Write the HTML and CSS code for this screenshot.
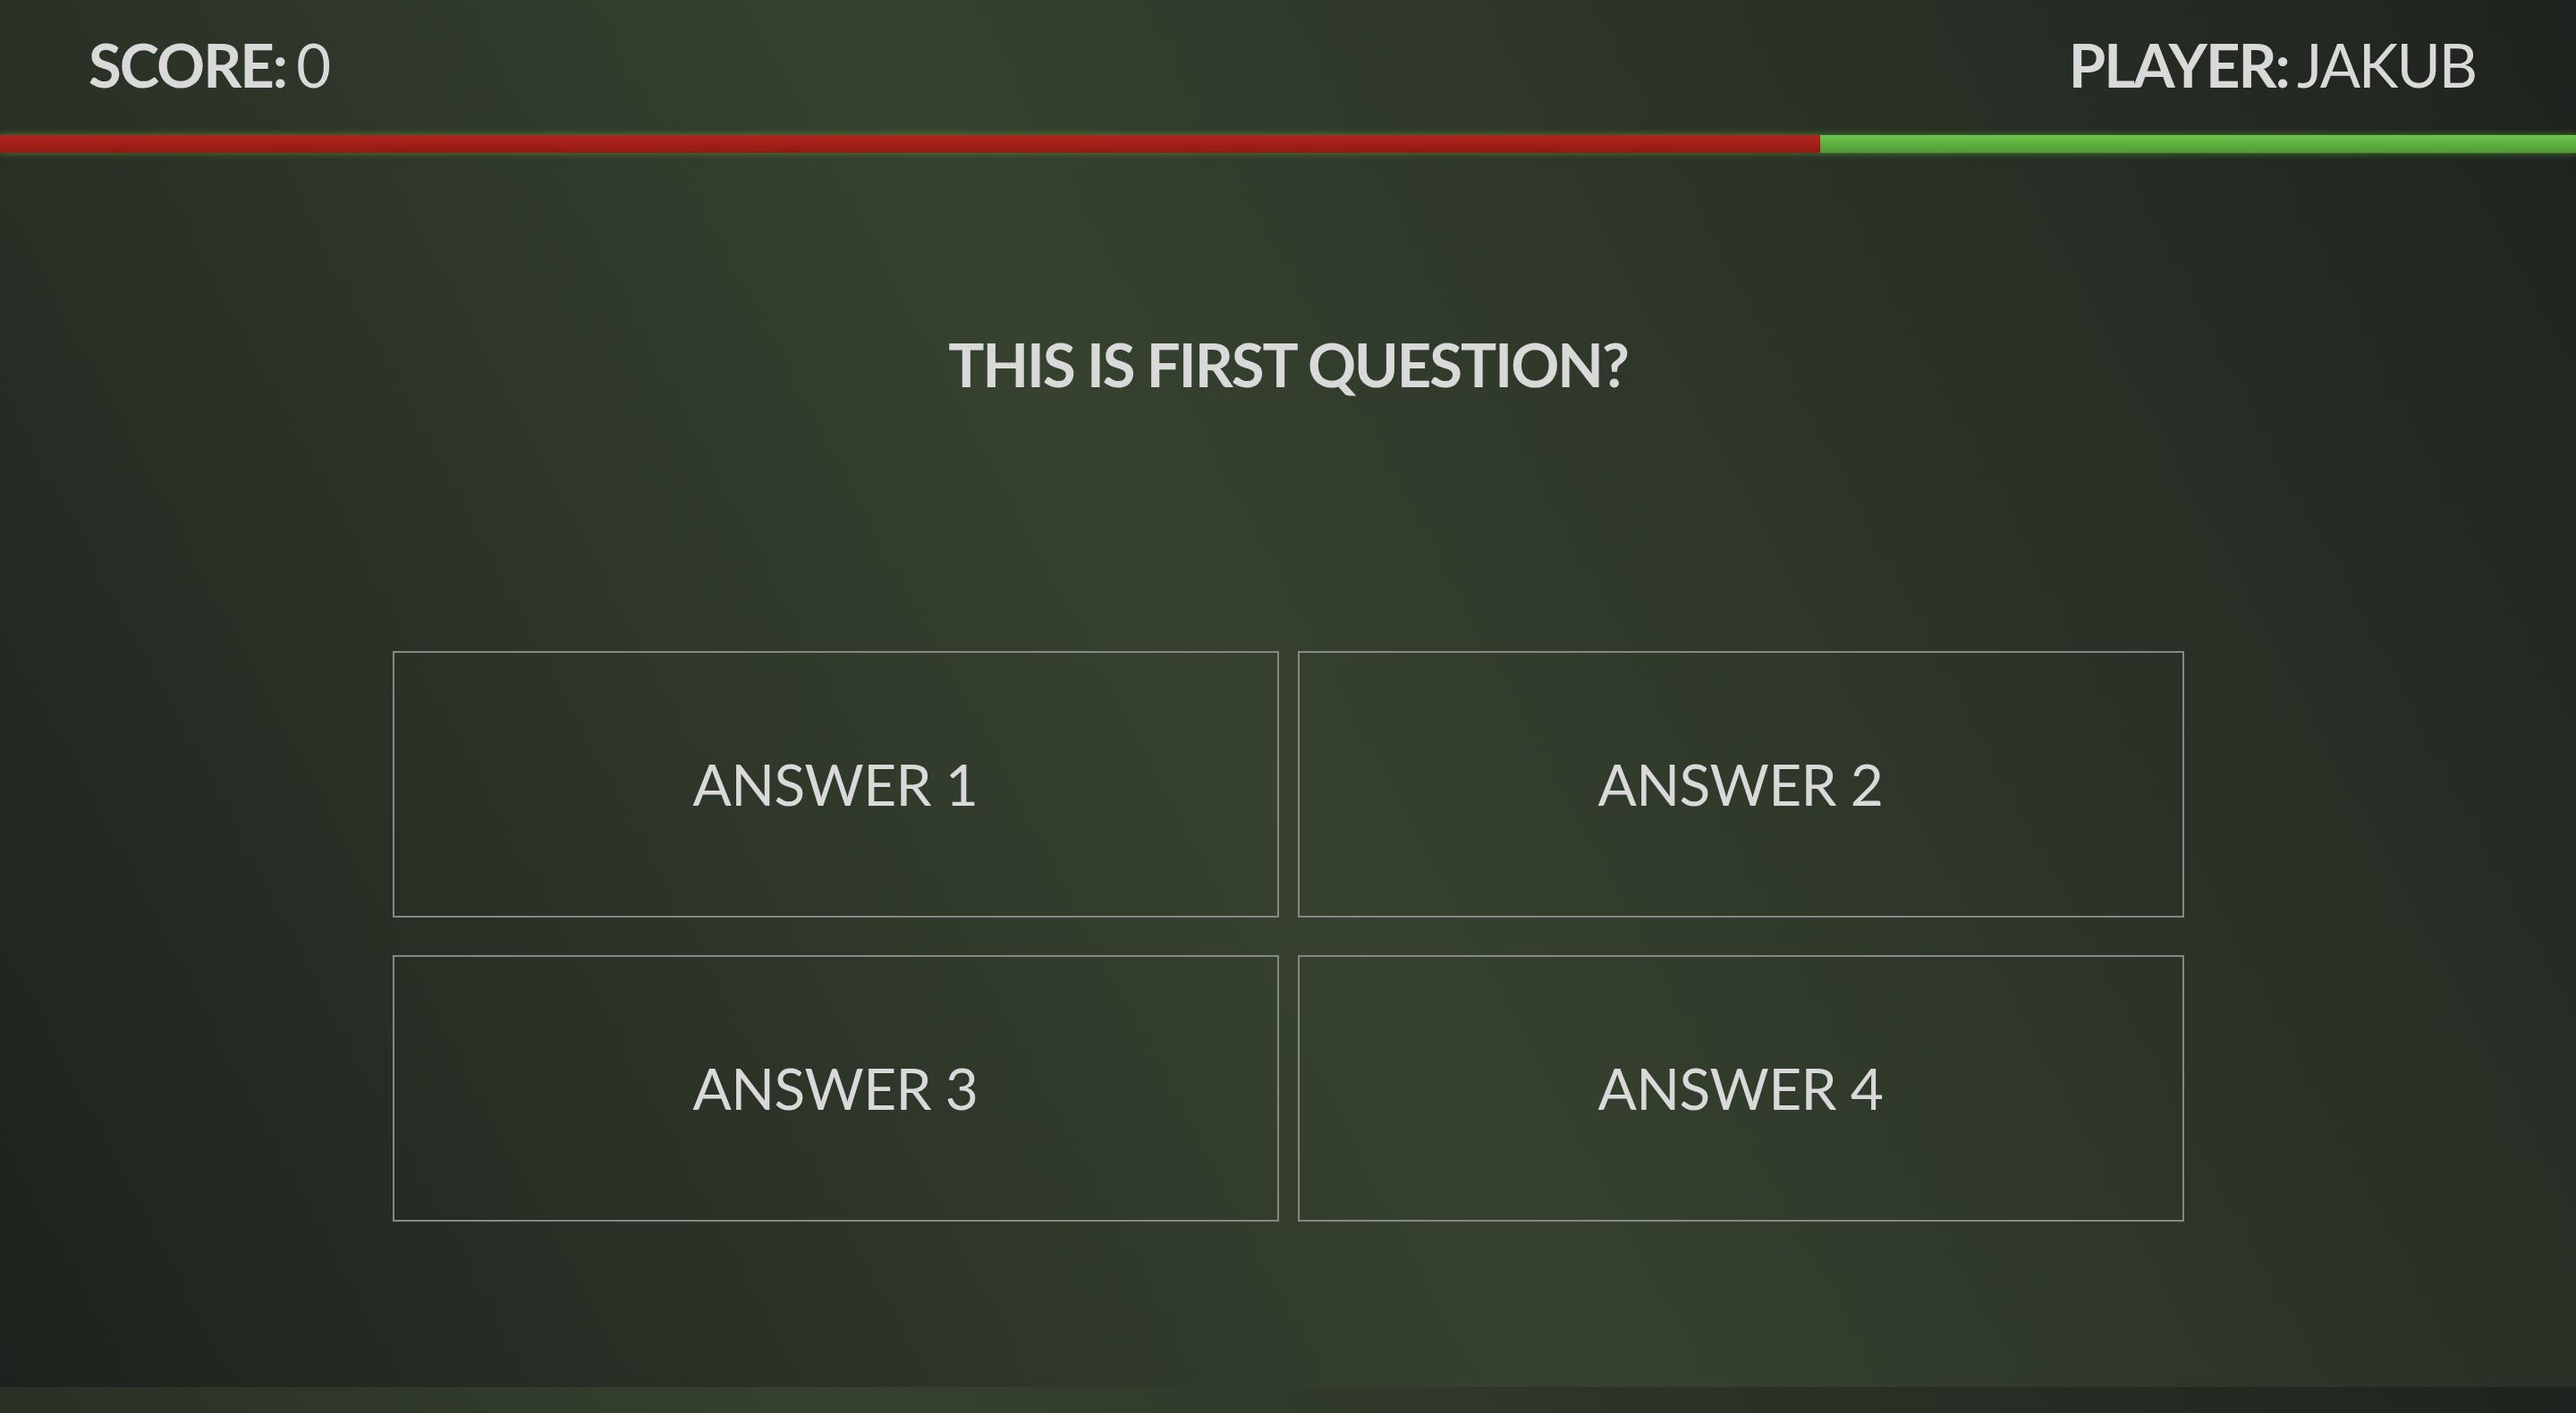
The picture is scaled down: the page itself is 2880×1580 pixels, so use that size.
FILE: index.html
```html
<!DOCTYPE html>
<html lang="en">
<head>
<meta charset="utf-8">
<title>Quiz</title>
<link rel="stylesheet" href="styles.css">
</head>
<body>
  <header class="topbar">
    <div class="stat"><span class="stat-label">SCORE:</span> <span class="stat-value">0</span></div>
    <div class="stat"><span class="stat-label">PLAYER:</span> <span class="stat-value">JAKUB</span></div>
  </header>
  <div class="timer">
    <div class="timer-elapsed" style="width: 70.66%"></div>
  </div>
  <main class="quiz">
    <h1 class="question">THIS IS FIRST QUESTION?</h1>
    <div class="answers">
      <button class="answer">ANSWER 1</button>
      <button class="answer">ANSWER 2</button>
      <button class="answer">ANSWER 3</button>
      <button class="answer">ANSWER 4</button>
    </div>
  </main>
</body>
</html>
```

FILE: styles.css
```css
html {
  background: linear-gradient(62deg, #1e221e 0%, #36422f 48%, #1f231f 100%) 0 0 / 100% 1551px repeat;
  min-height: 100%;
}

body {
  margin: 0;
  font-family: "Lato", "Open Sans", sans-serif;
  color: #d9d9d9;
}

.topbar {
  height: 151px;
  box-sizing: border-box;
  padding: 32px 112px 0 99px;
  display: flex;
  justify-content: space-between;
  align-items: flex-start;
  font-size: 67px;
  line-height: 1.2;
  letter-spacing: -2px;
  word-spacing: -4px;
}

.stat-label {
  font-weight: 700;
}

.stat-value {
  font-weight: 400;
}

.timer {
  height: 20px;
  background: linear-gradient(to bottom, #6dc54b, #4f9935);
  box-shadow: 0 0 7px 1px rgba(90, 170, 60, 0.55);
  display: flex;
}

.timer-elapsed {
  height: 100%;
  background: linear-gradient(to bottom, #b2251c, #911a13);
}

.quiz {
  display: flex;
  flex-direction: column;
  align-items: center;
  padding-top: 196px;
  padding-bottom: 185px;
}

.question {
  margin: 0;
  font-size: 67px;
  font-weight: 700;
  line-height: 1.2;
  letter-spacing: -2px;
  color: #d9d9d9;
}

.answers {
  margin-top: 281px;
  display: grid;
  grid-template-columns: 991px 991px;
  grid-auto-rows: 298px;
  column-gap: 21px;
  row-gap: 42px;
}

.answer {
  box-sizing: border-box;
  background: transparent;
  border: 2px solid #858885;
  color: #d9d9d9;
  font-family: "Lato", "Open Sans", sans-serif;
  font-size: 64px;
  font-weight: 400;
  letter-spacing: -0.6px;
  display: flex;
  align-items: center;
  justify-content: center;
  padding: 0 0 2px;
  cursor: pointer;
}
```
